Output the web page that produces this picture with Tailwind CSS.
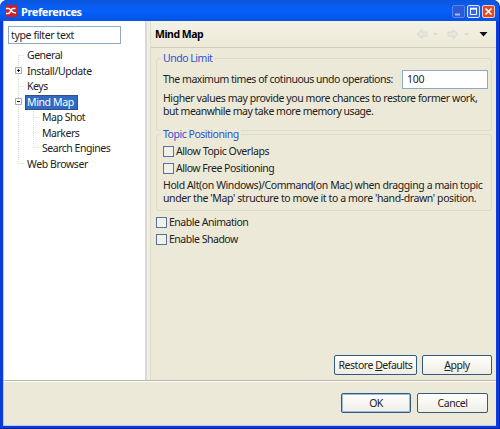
<!DOCTYPE html>
<html lang="en"><head><meta charset="utf-8"><title>Preferences</title>
<script src="https://cdn.jsdelivr.net/npm/@tailwindcss/browser@4"></script></head>
<body class="bg-white overflow-hidden">
<div class="w-[500px] h-[429px] flex flex-col overflow-hidden rounded-t-[7px] bg-[#0a3bdc] font-['Noto_Sans',sans-serif] text-[10.500px] tracking-[-0.480px] leading-[13px] text-[#222] whitespace-nowrap border-r border-b border-[#0020a8]">
  <header class="h-[21px] shrink-0 flex items-center pl-[5px] pr-[4px] bg-linear-to-b from-[#0b55dc] via-[#0560fa] to-[#0353e6]">
    <svg class="w-[12px] h-[12px]" viewBox="0 0 12 12"><rect width="12" height="12" rx="1" fill="#c9202b"/><path d="M1 3.500h2.500c2.500 0 2.500 4.500 7.500 4.500M1 8.500h2c3 0 2.500-5 5-5h2.500" fill="none" stroke="#fff" stroke-width="1.500"/></svg>
    <h1 class="ml-[4px] flex-1 font-bold text-[11px] text-white tracking-[-0.400px] pt-[2px]">Preferences</h1>
    <div class="flex gap-[2px] pt-px">
      <svg class="w-[13px] h-[13px]" viewBox="0 0 13 13"><rect x=".5" y=".5" width="12" height="12" rx="1.500" fill="#2b5bd8" stroke="#5a82e8"/><path d="M3 9.500h5" stroke="#a5bcf5" stroke-width="2"/></svg>
      <svg class="w-[13px] h-[13px]" viewBox="0 0 13 13"><rect x=".5" y=".5" width="12" height="12" rx="1.500" fill="#2e6bf0" stroke="#dce8ff"/><path d="M3.500 4h6v5.500h-6z" fill="none" stroke="#fff"/><path d="M3 3.500h7" stroke="#fff" stroke-width="1.500"/></svg>
      <svg class="w-[13px] h-[13px]" viewBox="0 0 13 13"><rect x=".5" y=".5" width="12" height="12" rx="1.500" fill="#e04a28" stroke="#f7c9bb"/><path d="M3.500 3.500l6 6M9.500 3.500l-6 6" stroke="#fff" stroke-width="1.700"/></svg>
    </div>
  </header>
  <main class="h-[405px] ml-[3px] mr-[3px] flex flex-col bg-[#ece9d8] border-l border-b border-[#b4cdf0]">
    <div class="h-[359px] flex shrink-0">
      <aside class="w-[141px] bg-white pl-[4px] pt-[5px] shrink-0">
        <div class="w-[113px] h-[18px] border border-[#8eaac5] pl-[2px] leading-[16px] tracking-[-0.370px]">type filter text</div>
        <div class="relative mt-[3px] leading-[15.500px]">
          <svg class="absolute left-0 top-0 w-[40px] h-[124px]" viewBox="0 0 40 124" fill="none"><path d="M10.500 8v108.500M10.500 8.500h6M10.500 23.500h6M10.500 39.500h6M10.500 54.500h6M10.500 116.500h6M25.500 62v38.500M25.500 70.500h6M25.500 85.500h6M25.500 100.500h6" stroke="#dadada" stroke-dasharray="1 1"/><g fill="#fff" stroke="#a3acb5"><path d="M7.500 20.500h6v6h-6zM7.500 51.500h6v6h-6z"/></g><path d="M9 23.500h3M10.500 22v3M9 54.500h3" stroke="#222"/></svg>
          <ul class="relative pl-[19px] pt-px">
            <li>General</li><li class="tracking-[-0.400px]">Install/Update</li><li>Keys</li>
            <li><span class="inline-block align-top h-[15px] leading-[14px] -ml-[2px] pl-[2px] w-[53px] bg-[#316ac5] text-white outline outline-1 -outline-offset-1 outline-[#315180] tracking-[-0.370px]">Mind Map</span></li>
            <li class="pl-[15px]">Map Shot</li><li class="pl-[15px]">Markers</li><li class="pl-[15px]">Search Engines</li><li class="tracking-[-0.400px]">Web Browser</li>
          </ul>
        </div>
      </aside>
      <div class="w-[6px] shrink-0 border-l-2 border-r border-l-[#dcd8d2] border-r-[#dfdccb] bg-[#f1efe5]"></div>
      <section class="flex-1 min-w-0">
        <div class="h-[27px] flex items-center pl-[4px] pr-[8px] border-b border-[#cfccbd] bg-linear-to-b from-[#f4f2e6] to-[#ece9d8]">
          <h2 class="flex-1 font-bold text-black pt-px">Mind Map</h2>
          <svg class="w-[73px] h-[12px] shrink-0" viewBox="0 0 73 12"><path d="M7 1.500v2.500h5v4H7v2.500L2 6z" fill="#e8e7df" stroke="#dad9d0"/><path d="M38 1.500v2.500h-5v4h5v2.500L43 6z" fill="#e8e7df" stroke="#dad9d0"/><path d="M18 5h5l-2.500 3zM49 5h5l-2.500 3z" fill="#dedcd0"/><path d="M64.500 4h8l-4 4.500z" fill="#101018"/></svg>
        </div>
        <div class="px-[5px] pt-[4px]">
          <fieldset class="relative w-[336px] h-[73px] border border-[#dedbcc] rounded-[3px] mt-[6px] pl-[6px] pt-[11px]">
            <span class="absolute left-[4px] -top-[7px] px-[2px] bg-[#ece9d8] text-[#3151d0]">Undo Limit</span>
            <div class="flex h-[18px] items-center"><label class="w-[239px] shrink-0">The maximum times of cotinuous undo operations:</label><div class="w-[86px] h-[19px] border border-[#8eaac5] bg-white pl-[4px] leading-[16px] tracking-[-0.200px]">100</div></div>
            <p class="mt-[4px]"><span class="tracking-[-0.420px]">Higher values may provide you more chances to restore former work,</span><br>but meanwhile may take more memory usage.</p>
          </fieldset>
          <fieldset class="relative w-[336px] h-[77px] border border-[#dedbcc] rounded-[3px] mt-[3px] pl-[6px] pt-[8px]">
            <span class="absolute left-[4px] -top-[7px] px-[2px] bg-[#ece9d8] text-[#3151d0]">Topic Positioning</span>
            <div class="flex items-center h-[17px] tracking-[-0.420px]"><i class="w-[11px] h-[11px] mr-[2px] border border-[#54749d] bg-[#f1f0e9]"></i>Allow Topic Overlaps</div>
            <div class="flex items-center h-[17px]"><i class="w-[11px] h-[11px] mr-[2px] border border-[#54749d] bg-[#f1f0e9]"></i>Allow Free Positioning</div>
            <p class="mt-[2px] tracking-[-0.400px]">Hold Alt(on Windows)/Command(on Mac) when dragging a main topic<br>under the 'Map' structure to move it to a more 'hand-drawn' position.</p>
          </fieldset>
          <div class="mt-[3px] flex items-center h-[17px]"><i class="w-[11px] h-[11px] mr-[2px] border border-[#54749d] bg-[#f1f0e9]"></i>Enable Animation</div>
          <div class="flex items-center h-[17px]"><i class="w-[11px] h-[11px] mr-[2px] border border-[#54749d] bg-[#f1f0e9]"></i>Enable Shadow</div>
        </div>
        <div class="flex justify-end gap-[5px] pr-[4px] mt-[107px]">
          <button class="w-[83px] h-[20px] pt-px rounded-[2px] border border-[#315a7e] bg-linear-to-b from-white to-[#efede4]">Restore <u>D</u>efaults</button>
          <button class="w-[70px] h-[20px] pt-px rounded-[2px] border border-[#315a7e] bg-linear-to-b from-white to-[#efede4]"><u>A</u>pply</button>
        </div>
      </section>
    </div>
    <footer class="flex-1 border-t border-[#b9b6a8] shadow-[inset_0_1px_0_#fff] flex justify-end gap-[6px] pt-[12px] pr-[8px]">
      <button class="w-[70px] h-[20px] pt-px rounded-[2px] border border-[#315a7e] bg-linear-to-b from-white to-[#efede4] shadow-[inset_0_0_0_1px_#9dbbe9]">OK</button>
      <button class="w-[71px] h-[20px] pt-px rounded-[2px] border border-[#315a7e] bg-linear-to-b from-white to-[#efede4]">Cancel</button>
    </footer>
  </main>
</div>
</body></html>
